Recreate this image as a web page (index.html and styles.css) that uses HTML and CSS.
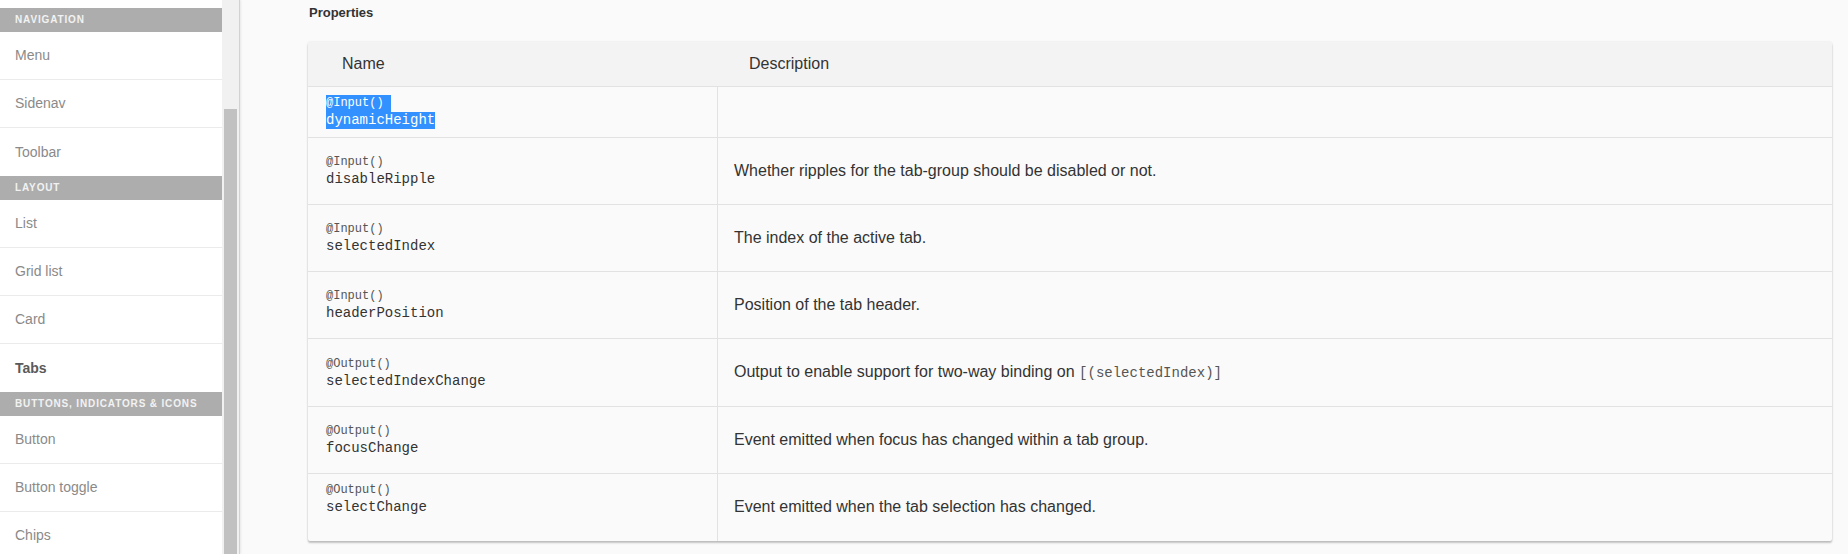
FILE: index.html
```html
<!DOCTYPE html>
<html lang="en">
<head>
<meta charset="utf-8">
<title>Tabs API</title>
<link rel="stylesheet" href="styles.css">
</head>
<body>
<div class="app">
  <aside class="sidenav">
    <nav class="nav-list">
      <div class="nav-header">Navigation</div>
      <a class="nav-item">Menu</a>
      <a class="nav-item">Sidenav</a>
      <a class="nav-item last">Toolbar</a>
      <div class="nav-header">Layout</div>
      <a class="nav-item">List</a>
      <a class="nav-item">Grid list</a>
      <a class="nav-item">Card</a>
      <a class="nav-item last active">Tabs</a>
      <div class="nav-header">Buttons, Indicators &amp; Icons</div>
      <a class="nav-item">Button</a>
      <a class="nav-item">Button toggle</a>
      <a class="nav-item">Chips</a>
    </nav>
    <div class="scrollbar"><div class="scroll-thumb"></div></div>
  </aside>
  <main class="content">
    <h3 class="section-title">Properties</h3>
    <table class="props">
      <thead>
        <tr><th class="col-name">Name</th><th class="col-desc">Description</th></tr>
      </thead>
      <tbody>
        <tr>
          <td class="name-cell"><div class="deco"><span class="sel sel-deco">@Input()</span></div><div class="prop"><span class="sel">dynamicHeight</span></div></td>
          <td class="desc-cell"></td>
        </tr>
        <tr>
          <td class="name-cell"><div class="deco">@Input()</div><div class="prop">disableRipple</div></td>
          <td class="desc-cell">Whether ripples for the tab-group should be disabled or not.</td>
        </tr>
        <tr>
          <td class="name-cell"><div class="deco">@Input()</div><div class="prop">selectedIndex</div></td>
          <td class="desc-cell">The index of the active tab.</td>
        </tr>
        <tr>
          <td class="name-cell"><div class="deco">@Input()</div><div class="prop">headerPosition</div></td>
          <td class="desc-cell">Position of the tab header.</td>
        </tr>
        <tr>
          <td class="name-cell"><div class="deco">@Output()</div><div class="prop">selectedIndexChange</div></td>
          <td class="desc-cell">Output to enable support for two-way binding on <code>[(selectedIndex)]</code></td>
        </tr>
        <tr>
          <td class="name-cell"><div class="deco">@Output()</div><div class="prop">focusChange</div></td>
          <td class="desc-cell">Event emitted when focus has changed within a tab group.</td>
        </tr>
        <tr>
          <td class="name-cell"><div class="deco">@Output()</div><div class="prop">selectChange</div></td>
          <td class="desc-cell">Event emitted when the tab selection has changed.</td>
        </tr>
      </tbody>
    </table>
  </main>
</div>
</body>
</html>
```
FILE: styles.css
```css
html, body {
  margin: 0;
  padding: 0;
  height: 554px;
  overflow: hidden;
  background: #fafafa;
  font-family: "Liberation Sans", Arial, sans-serif;
}

.app {
  display: flex;
  height: 554px;
}

.sidenav {
  width: 239px;
  flex: none;
  display: flex;
  border-right: 1px solid #d2d2d2;
  box-shadow: 1px 0 2px rgba(0, 0, 0, 0.08);
  overflow: hidden;
}

.nav-list {
  width: 222px;
  flex: none;
  background: #fff;
  padding-top: 8px;
  display: flex;
  flex-direction: column;
}

.nav-header {
  height: 24px;
  line-height: 24px;
  flex: none;
  background: #adadad;
  color: #f2f2f2;
  font-size: 10px;
  font-weight: bold;
  letter-spacing: 0.85px;
  text-transform: uppercase;
  padding-left: 15px;
}

.nav-item {
  height: 47px;
  line-height: 47px;
  flex: none;
  border-bottom: 1px solid #ebebeb;
  padding-left: 15px;
  font-size: 14px;
  color: #8a8a8a;
}

.nav-item.last {
  height: 48px;
  line-height: 48px;
  border-bottom: none;
}

.nav-item.active {
  font-weight: bold;
  color: #5a5a5a;
}

.scrollbar {
  width: 17px;
  flex: none;
  background: #f1f1f1;
  display: flex;
  flex-direction: column;
  padding-top: 109px;
  box-sizing: border-box;
}

.scroll-thumb {
  flex: 1;
  margin: 0 2px;
  background: #c1c1c1;
}

.content {
  flex: 1;
  padding: 0 16px 0 68px;
}

.section-title {
  margin: 0 0 0 1px;
  padding-top: 5px;
  line-height: 16px;
  font-size: 13px;
  font-weight: bold;
  color: #333;
}

.props {
  margin-top: 21px;
  width: 100%;
  border-spacing: 0;
  border-collapse: separate;
  background: #fafafa;
  box-shadow: 0 2px 2px rgba(0, 0, 0, 0.22), 0 0 2px rgba(0, 0, 0, 0.12);
  border-radius: 2px;
}

.props th {
  height: 44px;
  padding: 0;
  background: #f3f3f3;
  border-bottom: 1px solid #e2e2e2;
  font-size: 16px;
  font-weight: normal;
  text-align: left;
  color: #333;
}

.props th.col-name {
  width: 375px;
  padding-left: 34px;
}

.props th.col-desc {
  padding-left: 32px;
}

.props td {
  border-bottom: 1px solid #e2e2e2;
  vertical-align: middle;
}

.props tbody tr:last-child td {
  border-bottom: none;
  padding-bottom: 25px;
}

.name-cell {
  padding: 8px 18px;
}

.desc-cell {
  border-left: 1px solid #e2e2e2;
  padding: 24px 16px;
  font-size: 16px;
  line-height: 18px;
  color: #333;
}

.deco {
  font-family: "Liberation Mono", "DejaVu Sans Mono", monospace;
  font-size: 12px;
  line-height: 17px;
  height: 17px;
  color: #555;
}

.prop {
  font-family: "Liberation Mono", "DejaVu Sans Mono", monospace;
  font-size: 14px;
  line-height: 17px;
  height: 17px;
  color: #333;
}

.sel {
  display: inline-block;
  line-height: 17px;
  background: #3390ff;
  color: #fff;
}

.sel-deco {
  padding-right: 7px;
}

code {
  font-family: "Liberation Mono", "DejaVu Sans Mono", monospace;
  font-size: 14px;
  line-height: 18px;
  color: #555;
}
```
